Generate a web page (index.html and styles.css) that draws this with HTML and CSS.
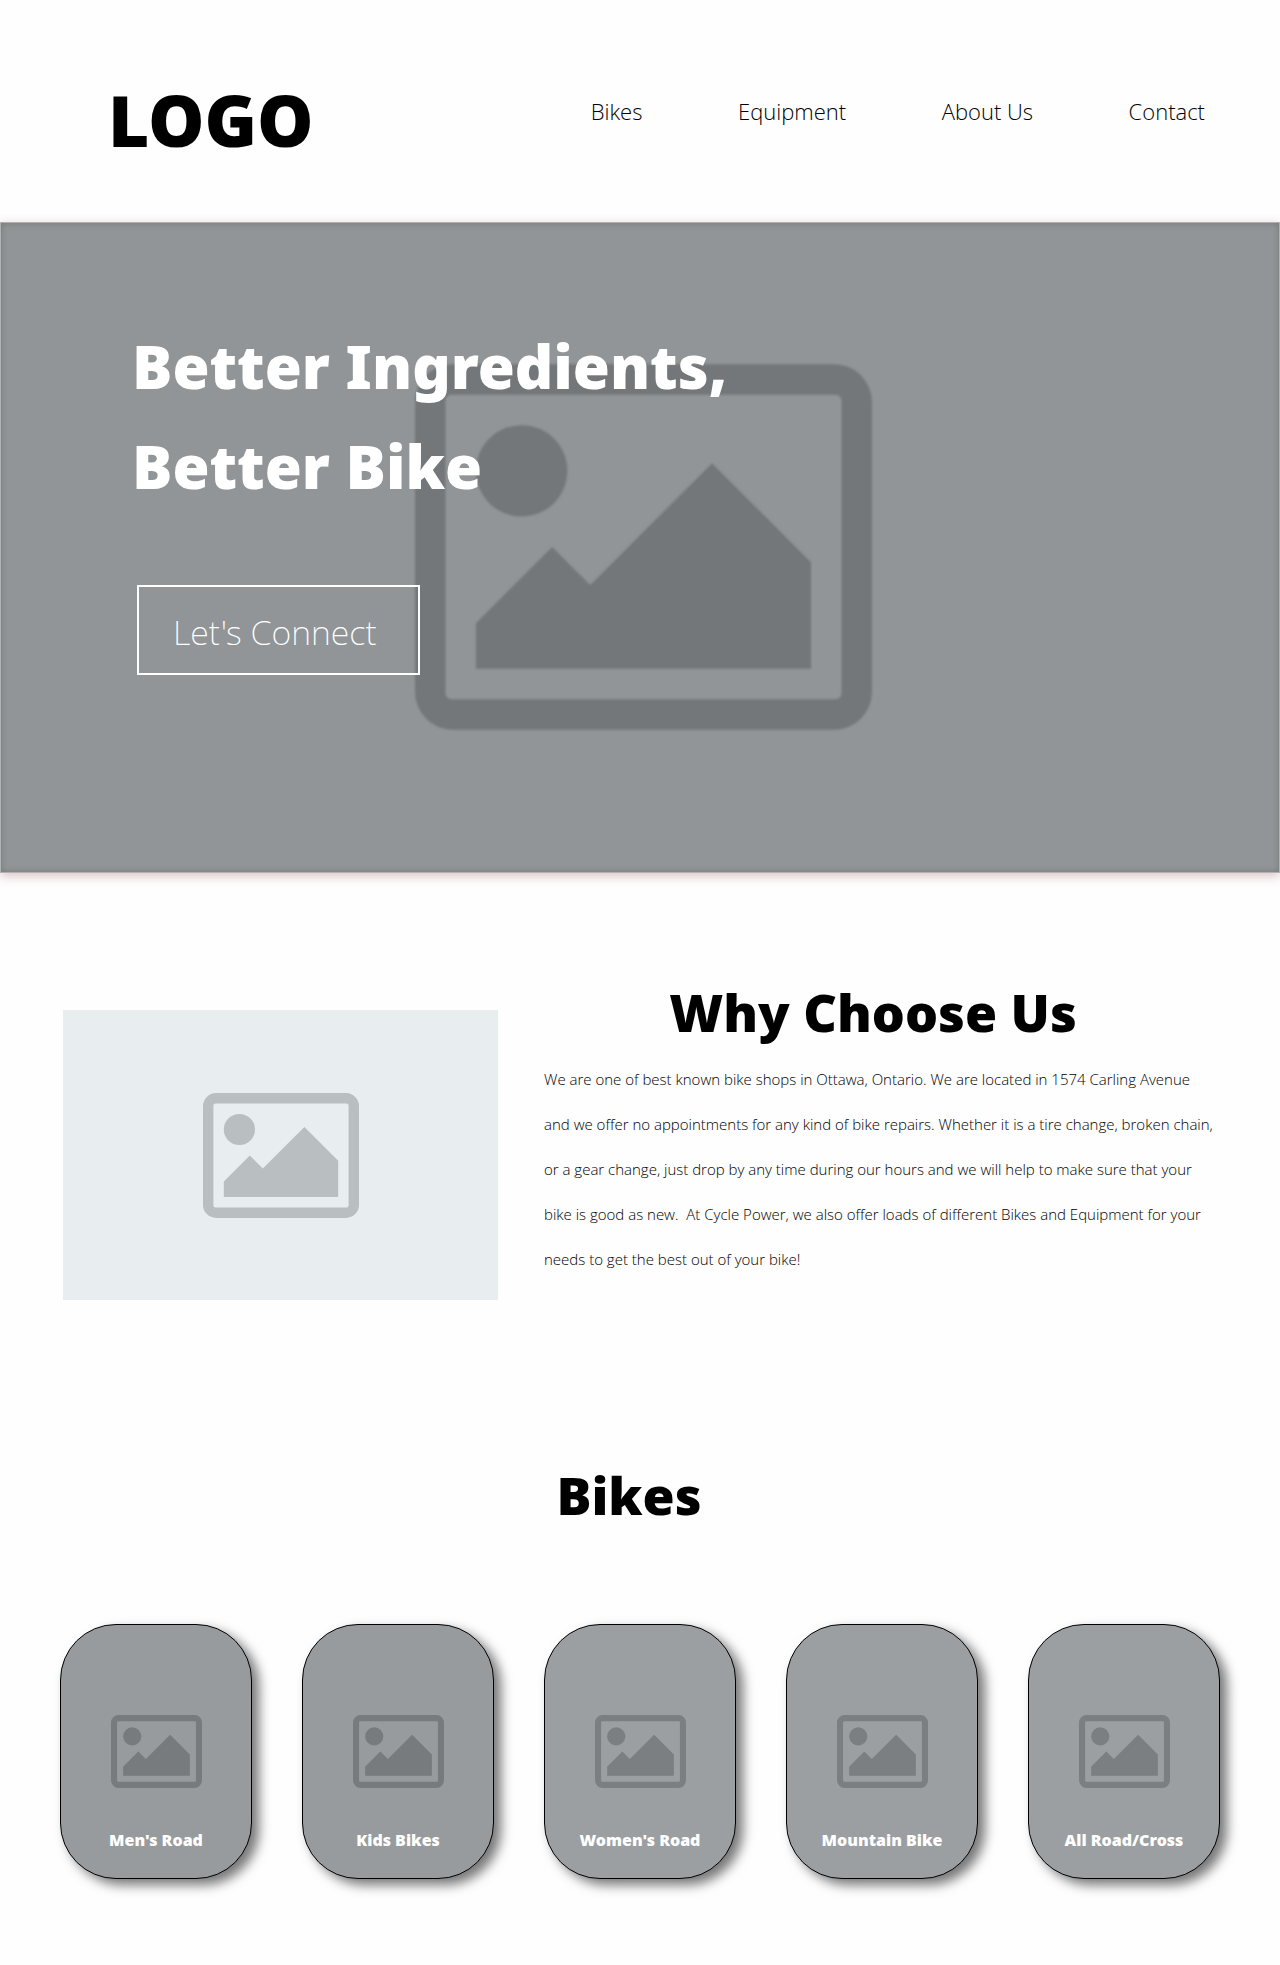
FILE: index.html
```html
<!DOCTYPE html>
<html lang="en">
<head>
<meta charset="utf-8">
<meta name="viewport" content="width=device-width, initial-scale=1">
<title>Cycle Power</title>
<link rel="stylesheet" href="styles.css">
</head>
<body>
<svg class="sprite" aria-hidden="true">
  <symbol id="picture" viewBox="0 0 15 12">
    <path fill-rule="evenodd" d="M1.25 0h12.5A1.25 1.25 0 0 1 15 1.25v9.5A1.25 1.25 0 0 1 13.75 12H1.25A1.25 1.25 0 0 1 0 10.75v-9.5A1.25 1.25 0 0 1 1.25 0zM1.2 1a.2.2 0 0 0-.2.2v9.6a.2.2 0 0 0 .2.2h12.6a.2.2 0 0 0 .2-.2V1.2a.2.2 0 0 0-.2-.2z"/>
    <circle cx="3.5" cy="3.5" r="1.5"/>
    <path d="M2 10V8.5L4.5 6l1.25 1.25 4-4L13 6.5V10z"/>
  </symbol>
</svg>

<header class="header">
  <a class="logo" href="#">LOGO</a>
  <nav class="nav">
    <a href="#bikes">Bikes</a>
    <a href="#equipment">Equipment</a>
    <a href="#about">About Us</a>
    <a href="#contact">Contact</a>
  </nav>
</header>

<main>
  <section class="hero">
    <svg class="hero-picture" aria-hidden="true"><use href="#picture"/></svg>
    <h1>Better Ingredients,<br>Better Bike</h1>
    <button class="connect" type="button">Let's Connect</button>
  </section>

  <section class="about" id="about">
    <div class="photo"><svg aria-hidden="true"><use href="#picture"/></svg></div>
    <div class="about-text">
      <h2>Why Choose Us</h2>
      <p>We are one of best known bike shops in Ottawa, Ontario. We are located in 1574 Carling Avenue<br>
      and we offer no appointments for any kind of bike repairs. Whether it is a tire change, broken chain,<br>
      or a gear change, just drop by any time during our hours and we will help to make sure that your<br>
      bike is good as new.&nbsp; At Cycle Power, we also offer loads of different Bikes and Equipment for your<br>
      needs to get the best out of your bike!</p>
    </div>
  </section>

  <section class="bikes" id="bikes">
    <h2>Bikes</h2>
    <div class="cards">
      <a class="card dark" href="#mens"><svg aria-hidden="true"><use href="#picture"/></svg><span>Men's Road</span></a>
      <a class="card dark" href="#kids"><svg aria-hidden="true"><use href="#picture"/></svg><span>Kids Bikes</span></a>
      <a class="card" href="#womens"><svg aria-hidden="true"><use href="#picture"/></svg><span>Women's Road</span></a>
      <a class="card" href="#mountain"><svg aria-hidden="true"><use href="#picture"/></svg><span>Mountain Bike</span></a>
      <a class="card" href="#cross"><svg aria-hidden="true"><use href="#picture"/></svg><span>All Road/Cross</span></a>
    </div>
  </section>
</main>
</body>
</html>
```
FILE: styles.css
```css
* {
  box-sizing: border-box;
}

body {
  margin: 0;
  background: #fefefe;
  color: #000;
  font-family: "Noto Sans", "Open Sans", sans-serif;
  font-weight: 300;
}

a {
  color: inherit;
  text-decoration: none;
}

h1,
h2,
p {
  margin: 0;
}

h1,
h2,
.logo,
.card {
  font-weight: 900;
}

.sprite {
  display: none;
}

.header {
  display: flex;
  justify-content: space-between;
  padding: 70px 75px 52px 108px;
}

.logo {
  font-size: 71px;
  line-height: 100px;
}

.nav {
  display: flex;
  justify-content: space-between;
  width: 56%;
  padding-top: 25px;
  font-family: "Open Sans", "Noto Sans", sans-serif;
  font-size: 22px;
  line-height: 32px;
}

.hero {
  position: relative;
  padding: 93px 48px 197px 131px;
  border: 1px solid #b0b2b2;
  background: #919597;
  color: #fff;
  box-shadow: 0 3px 10px rgba(110, 20, 20, 0.25), inset 0 0 6px rgba(100, 100, 100, 0.6);
}

.hero-picture {
  position: absolute;
  inset: 0 0 2px 7px;
  width: 457px;
  height: 366px;
  margin: auto;
  fill: #737779;
  filter: blur(1px);
}

.hero h1 {
  position: relative;
  font-size: 60px;
  line-height: 100px;
}

.connect {
  position: relative;
  display: block;
  min-width: 283px;
  margin: 69px 0 0 5px;
  padding: 20px 34px 16px;
  border: 2px solid #fff;
  background: none;
  color: #fff;
  font-family: inherit;
  font-size: 34px;
  font-weight: 200;
  line-height: 50px;
  text-align: left;
}

.about {
  display: grid;
  grid-template-columns: minmax(0, 435fr) minmax(0, 672fr);
  gap: 46px;
  align-items: start;
  padding: 103px 64px 0 63px;
}

.photo {
  display: flex;
  align-items: center;
  justify-content: center;
  aspect-ratio: 3 / 2;
  margin-top: 34px;
  background: #e8eef0;
  fill: #b9bec1;
}

.photo svg {
  width: 156px;
  height: 125px;
}

h2 {
  font-size: 52px;
  line-height: 72px;
  text-align: center;
}

.about h2 {
  padding-right: 14px;
}

.about p {
  margin-top: 9px;
  font-family: "Open Sans", "Noto Sans", sans-serif;
  font-size: 15px;
  line-height: 45px;
}

.bikes {
  padding: 159px 60px 86px;
}

.bikes h2 {
  padding-right: 22px;
}

.cards {
  display: grid;
  grid-template-columns: repeat(5, 1fr);
  gap: 50px;
  margin-top: 93px;
}

.card {
  display: flex;
  flex-direction: column;
  align-items: center;
  gap: 37px;
  padding: 90px 0 23px;
  border: 1px solid #000;
  border-radius: 56px;
  background: #9b9fa1;
  fill: #7b7f81;
  color: #fff;
  font-size: 16px;
  line-height: 30px;
  white-space: nowrap;
  box-shadow: 7px 6px 12px #777;
}

.card.dark {
  background: #979b9d;
  fill: #777b7d;
}

.card svg {
  width: 91px;
  height: 73px;
}
```
